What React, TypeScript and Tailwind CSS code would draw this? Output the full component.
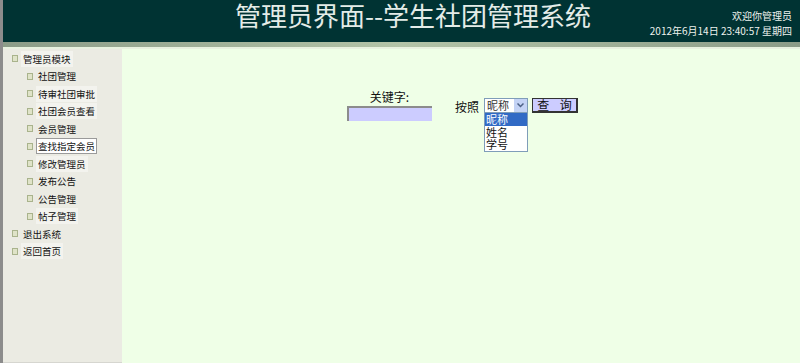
import React from 'react';

const font = '"Noto Sans CJK SC", "Liberation Sans", sans-serif';

type NavItem = { label: string; level: number; active?: boolean; highlight?: boolean };

const navItems: NavItem[] = [
  { label: '管理员模块', level: 0, highlight: true },
  { label: '社团管理', level: 1 },
  { label: '待审社团审批', level: 1, highlight: true },
  { label: '社团会员查看', level: 1, highlight: true },
  { label: '会员管理', level: 1 },
  { label: '查找指定会员', level: 1, active: true },
  { label: '修改管理员', level: 1, highlight: true },
  { label: '发布公告', level: 1 },
  { label: '公告管理', level: 1 },
  { label: '帖子管理', level: 1, highlight: true },
  { label: '退出系统', level: 0 },
  { label: '返回首页', level: 0, highlight: true },
];

const Bullet = () => (
  <span className="inline-block w-[6px] h-[7px] border border-[#a9b38c] bg-[#dfe3c8] shrink-0" />
);

const App: React.FC = () => {
  return (
    <div
      className="w-[800px] h-[363px] flex flex-col border-l-[3px] border-[#8c8c8c] bg-[#efffe7] overflow-hidden"
      style={{ fontFamily: font }}
    >
      {/* header */}
      <div className="h-[42px] bg-[#003333] flex items-start shrink-0">
        <h1 className="ml-[232px] text-[26px] leading-[30px] text-[#e4ece8] font-normal whitespace-nowrap">
          管理员界面--学生社团管理系统
        </h1>
        <div className="ml-auto flex flex-col items-end pr-[8px] pt-[8px] text-[10px] leading-[15px] text-[#eef2ee]">
          <span>欢迎你管理员</span>
          <span className="whitespace-nowrap">2012年6月14日 23:40:57 星期四</span>
        </div>
      </div>
      <div className="h-[5px] shrink-0 bg-[linear-gradient(to_right,#8b9c88,#b3c4a8_50%,#8b9c88)]" />
      <div className="h-[2px] shrink-0 bg-[#e8f2e0]" />

      <div className="flex flex-1 min-h-0">
        {/* sidebar */}
        <div className="w-[119px] bg-[#ebebe3] pt-[1px] flex flex-col border-b border-[#d6d6d0]">
          {navItems.map((item) => (
            <div
              key={item.label}
              className={`flex items-center h-[17.5px] ${item.level === 0 ? 'pl-[9px]' : 'pl-[24px]'}`}
            >
              <Bullet />
              <span
                className={`ml-[3px] px-[1px] text-[9.5px] leading-[14px] text-[#111] whitespace-nowrap ${
                  item.active
                    ? 'bg-white border border-[#9a9a9a]'
                    : item.highlight
                    ? 'bg-[#f3f3ee] border border-transparent'
                    : 'border border-transparent'
                }`}
              >
                {item.label}
              </span>
            </div>
          ))}
        </div>

        {/* main */}
        <div className="flex-1 flex items-start pl-[225px] pt-[41px] text-[12px] text-[#111]">
          <div className="w-[85px] flex flex-col items-center">
            <span className="leading-[14px]">关键字:</span>
            <input
              className="mt-[2px] w-[85px] h-[15px] bg-[#ccccff] border-t-2 border-l-2 border-[#8c8c8c] outline-none"
              readOnly
            />
          </div>
          <div className="ml-[23px] mt-[8px] flex items-start">
            <span className="leading-[14px] mt-[2px]">按照</span>
            <div className="relative ml-[5px]">
              <div className="w-[44px] h-[15px] bg-white border border-[#7f9db9] flex items-center justify-between pl-[2px]">
                <span className="text-[11px] leading-[13px] text-[#333]">昵称</span>
                <span className="w-[13px] h-[13px] bg-[#c4d3f5] flex items-center justify-center">
                  <svg width="7" height="5" viewBox="0 0 7 5">
                    <path d="M0.5 0.5 L3.5 3.5 L6.5 0.5" fill="none" stroke="#4d6185" strokeWidth="1.5" />
                  </svg>
                </span>
              </div>
              <div className="absolute left-0 top-[14px] w-[44px] bg-white border border-[#7f9db9] flex flex-col text-[11px] leading-[12.5px]">
                <span className="bg-[#316ac5] text-white pl-[1px]">昵称</span>
                <span className="pl-[1px]">姓名</span>
                <span className="pl-[1px]">学号</span>
              </div>
            </div>
            <button className="ml-[4px] w-[46px] h-[15px] bg-[#ccccff] border border-[#333] border-b-2 border-r-2 text-[12px] leading-[12px] tracking-[4px] pl-[4px]">
              查 询
            </button>
          </div>
        </div>
      </div>
    </div>
  );
};

export default App;
